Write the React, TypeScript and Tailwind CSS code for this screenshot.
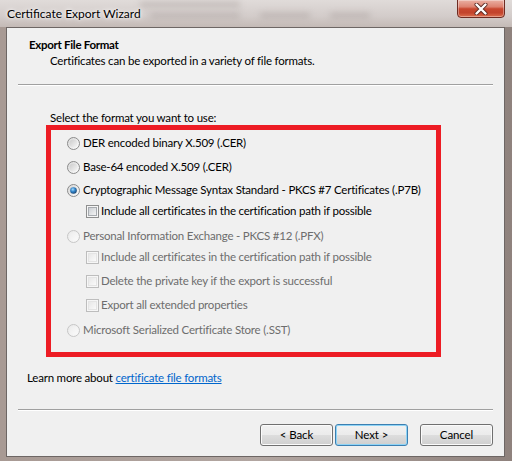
import React, { useId } from 'react';

type RowKind = 'radio' | 'check';

interface FormatRow {
  kind: RowKind;
  label: string;
  checked?: boolean;
  disabled?: boolean;
  gap: string;
}

const rows: FormatRow[] = [
  { kind: 'radio', label: 'DER encoded binary X.509 (.CER)', gap: 'mt-[5px]' },
  { kind: 'radio', label: 'Base-64 encoded X.509 (.CER)', gap: 'mt-[8px]' },
  {
    kind: 'radio',
    label: 'Cryptographic Message Syntax Standard - PKCS #7 Certificates (.P7B)',
    checked: true,
    gap: 'mt-[7px]',
  },
  { kind: 'check', label: 'Include all certificates in the certification path if possible', gap: 'mt-[5px]' },
  { kind: 'radio', label: 'Personal Information Exchange - PKCS #12 (.PFX)', disabled: true, gap: 'mt-[9px]' },
  {
    kind: 'check',
    label: 'Include all certificates in the certification path if possible',
    disabled: true,
    gap: 'mt-[5px]',
  },
  { kind: 'check', label: 'Delete the private key if the export is successful', disabled: true, gap: 'mt-[8px]' },
  { kind: 'check', label: 'Export all extended properties', disabled: true, gap: 'mt-[8px]' },
  { kind: 'radio', label: 'Microsoft Serialized Certificate Store (.SST)', disabled: true, gap: 'mt-[9px]' },
];

const Radio: React.FC<{ checked?: boolean; disabled?: boolean }> = ({ checked, disabled }) => {
  const id = useId().replace(/:/g, '');
  return (
    <svg width="13" height="13" viewBox="0 0 13 13" className="shrink-0">
      <defs>
        <linearGradient id={`${id}o`} x1="0" y1="0" x2="1" y2="1">
          <stop offset="0" stopColor={disabled ? '#e8e8e8' : '#d8d8d8'} />
          <stop offset="1" stopColor={disabled ? '#fbfbfb' : '#ffffff'} />
        </linearGradient>
        <linearGradient id={`${id}i`} x1="0" y1="0" x2="1" y2="1">
          <stop offset="0" stopColor={disabled ? '#ededed' : '#cbcbcb'} />
          <stop offset="1" stopColor={disabled ? '#fafafa' : '#f7f7f7'} />
        </linearGradient>
        <radialGradient id={`${id}d`} cx="0.4" cy="0.35" r="0.7">
          <stop offset="0" stopColor="#a6dcfb" />
          <stop offset="0.45" stopColor="#3587cc" />
          <stop offset="1" stopColor="#173f6b" />
        </radialGradient>
      </defs>
      <circle cx="6.5" cy="6.5" r="6" fill={`url(#${id}o)`} stroke={disabled ? '#c6c6c6' : '#8b8b8b'} />
      <circle cx="6.5" cy="6.5" r="4" fill={`url(#${id}i)`} />
      {checked && <circle cx="6.5" cy="6.5" r="3.3" fill={`url(#${id}d)`} />}
    </svg>
  );
};

const Check: React.FC<{ disabled?: boolean }> = ({ disabled }) => {
  const id = useId().replace(/:/g, '');
  return (
    <svg width="13" height="13" viewBox="0 0 13 13" className="shrink-0">
      <defs>
        <linearGradient id={`${id}f`} x1="0" y1="0" x2="1" y2="1">
          <stop offset="0" stopColor={disabled ? '#e6e6e6' : '#c9cdd2'} />
          <stop offset="1" stopColor={disabled ? '#fbfbfb' : '#f6f6f6'} />
        </linearGradient>
      </defs>
      <rect x="0.5" y="0.5" width="12" height="12" fill="#f6f6f6" stroke={disabled ? '#bdbdbd' : '#8e8f8f'} />
      <rect
        x="2.5"
        y="2.5"
        width="8"
        height="8"
        fill={`url(#${id}f)`}
        stroke={disabled ? '#e4e4e4' : '#a7abb0'}
      />
    </svg>
  );
};

const WinButton: React.FC<{ label: string; isDefault?: boolean }> = ({ label, isDefault }) => (
  <button
    className={`w-[73px] h-[22px] rounded-[3px] border text-[11.5px] tracking-[-0.1px] leading-none text-black bg-[linear-gradient(to_bottom,#f2f2f2_0%,#ebebeb_50%,#dddddd_51%,#cfcfcf_100%)] ${
      isDefault
        ? 'border-[#3c7fb1] shadow-[inset_0_0_0_1px_#8fd4f6]'
        : 'border-[#707070] shadow-[inset_0_0_0_1px_#fbfbfb]'
    }`}
  >
    {label}
  </button>
);

export default function App() {
  return (
    <div className="relative w-[512px] h-[461px] overflow-hidden bg-[linear-gradient(to_right,#a89a94_0%,#b2a6a1_50%,#8f827d_100%)] font-['Lato','Liberation_Sans',sans-serif] text-[11.5px] tracking-[-0.2px] text-black">
      {/* title bar */}
      <div className="relative h-[27px] flex justify-between pl-[7px] pr-[7px] bg-[linear-gradient(to_bottom,#e0dbd9_0%,#d3ccca_60%,#c4bab6_100%)]">
        <span className="absolute left-[140px] top-[2px] w-[100px] h-[5px] bg-[#a49a97] opacity-50 blur-[3px]" />
        <span className="absolute left-[150px] top-[13px] w-[90px] h-[5px] bg-[#a49a97] opacity-50 blur-[3px]" />
        <span className="absolute left-[260px] top-[13px] w-[50px] h-[5px] bg-[#a49a97] opacity-50 blur-[3px]" />
        <span className="absolute left-[330px] top-[13px] w-[40px] h-[5px] bg-[#a49a97] opacity-50 blur-[3px]" />
        <span className="relative self-center text-[12px] tracking-normal leading-[16px] [text-shadow:0_0_6px_#ffffff,0_0_3px_#ffffff]">
          Certificate Export Wizard
        </span>
        <div className="relative w-[48px] h-[19px] -mt-[1px] rounded-b-[4px] border border-[#6e2b22] shadow-[inset_0_0_0_1px_rgba(255,255,255,0.35)] bg-[linear-gradient(to_bottom,#eab0a3_0%,#dd8270_40%,#c8472f_52%,#c2432c_75%,#dc6e4e_100%)] flex items-center justify-center">
          <svg width="14" height="12" viewBox="0 0 14 12">
            <path d="M2.5 1.5 L11.5 10.5 M11.5 1.5 L2.5 10.5" stroke="#5a2a24" strokeWidth="4" strokeLinecap="round" />
            <path d="M2.5 1.5 L11.5 10.5 M11.5 1.5 L2.5 10.5" stroke="#ffffff" strokeWidth="2.4" strokeLinecap="round" />
          </svg>
        </div>
      </div>

      {/* client area */}
      <div className="ml-[6px] w-[499px] h-[430px] border border-[#6d6664] bg-[#f0f0f0] flex flex-col">
        <div className="h-[56px] pl-[22px] pt-[9px]">
          <div className="font-bold tracking-[-0.3px] leading-[16px]">Export File Format</div>
          <div className="pl-[21px] leading-[16px]">Certificates can be exported in a variety of file formats.</div>
        </div>
        <div className="mx-[11px] h-[2px] border-t border-[#a0a0a0] border-b border-b-white" />

        <div className="mt-[24px] pl-[43px] h-[15px] leading-[15px]">Select the format you want to use:</div>

        <div className="ml-[39px] w-[395px] h-[232px] border-[5px] border-[#ed1c24] flex flex-col">
          {rows.map((row, i) => (
            <div
              key={i}
              className={`h-[16px] flex items-center ${row.gap} ${
                row.kind === 'radio' ? 'pl-[16px] gap-[3px]' : 'pl-[35px] gap-[2px]'
              } ${row.disabled ? 'text-[#6d6d6d]' : 'text-black'}`}
            >
              {row.kind === 'radio' ? (
                <Radio checked={row.checked} disabled={row.disabled} />
              ) : (
                <Check disabled={row.disabled} />
              )}
              <span className="whitespace-nowrap leading-[16px]">{row.label}</span>
            </div>
          ))}
        </div>

        <div className="mt-[13px] pl-[20px] leading-[16px] h-[16px]">
          Learn more about{' '}
          <a className="text-[#0066cc] underline underline-offset-1">certificate file formats</a>
        </div>

        <div className="mt-[23px] mx-[11px] h-[2px] border-t border-[#a0a0a0] border-b border-b-white" />

        <div className="mt-[13px] pr-[11px] flex justify-end">
          <WinButton label="< Back" />
          <div className="ml-[2px]">
            <WinButton label="Next >" isDefault />
          </div>
          <div className="ml-[12px]">
            <WinButton label="Cancel" />
          </div>
        </div>
      </div>
    </div>
  );
}
